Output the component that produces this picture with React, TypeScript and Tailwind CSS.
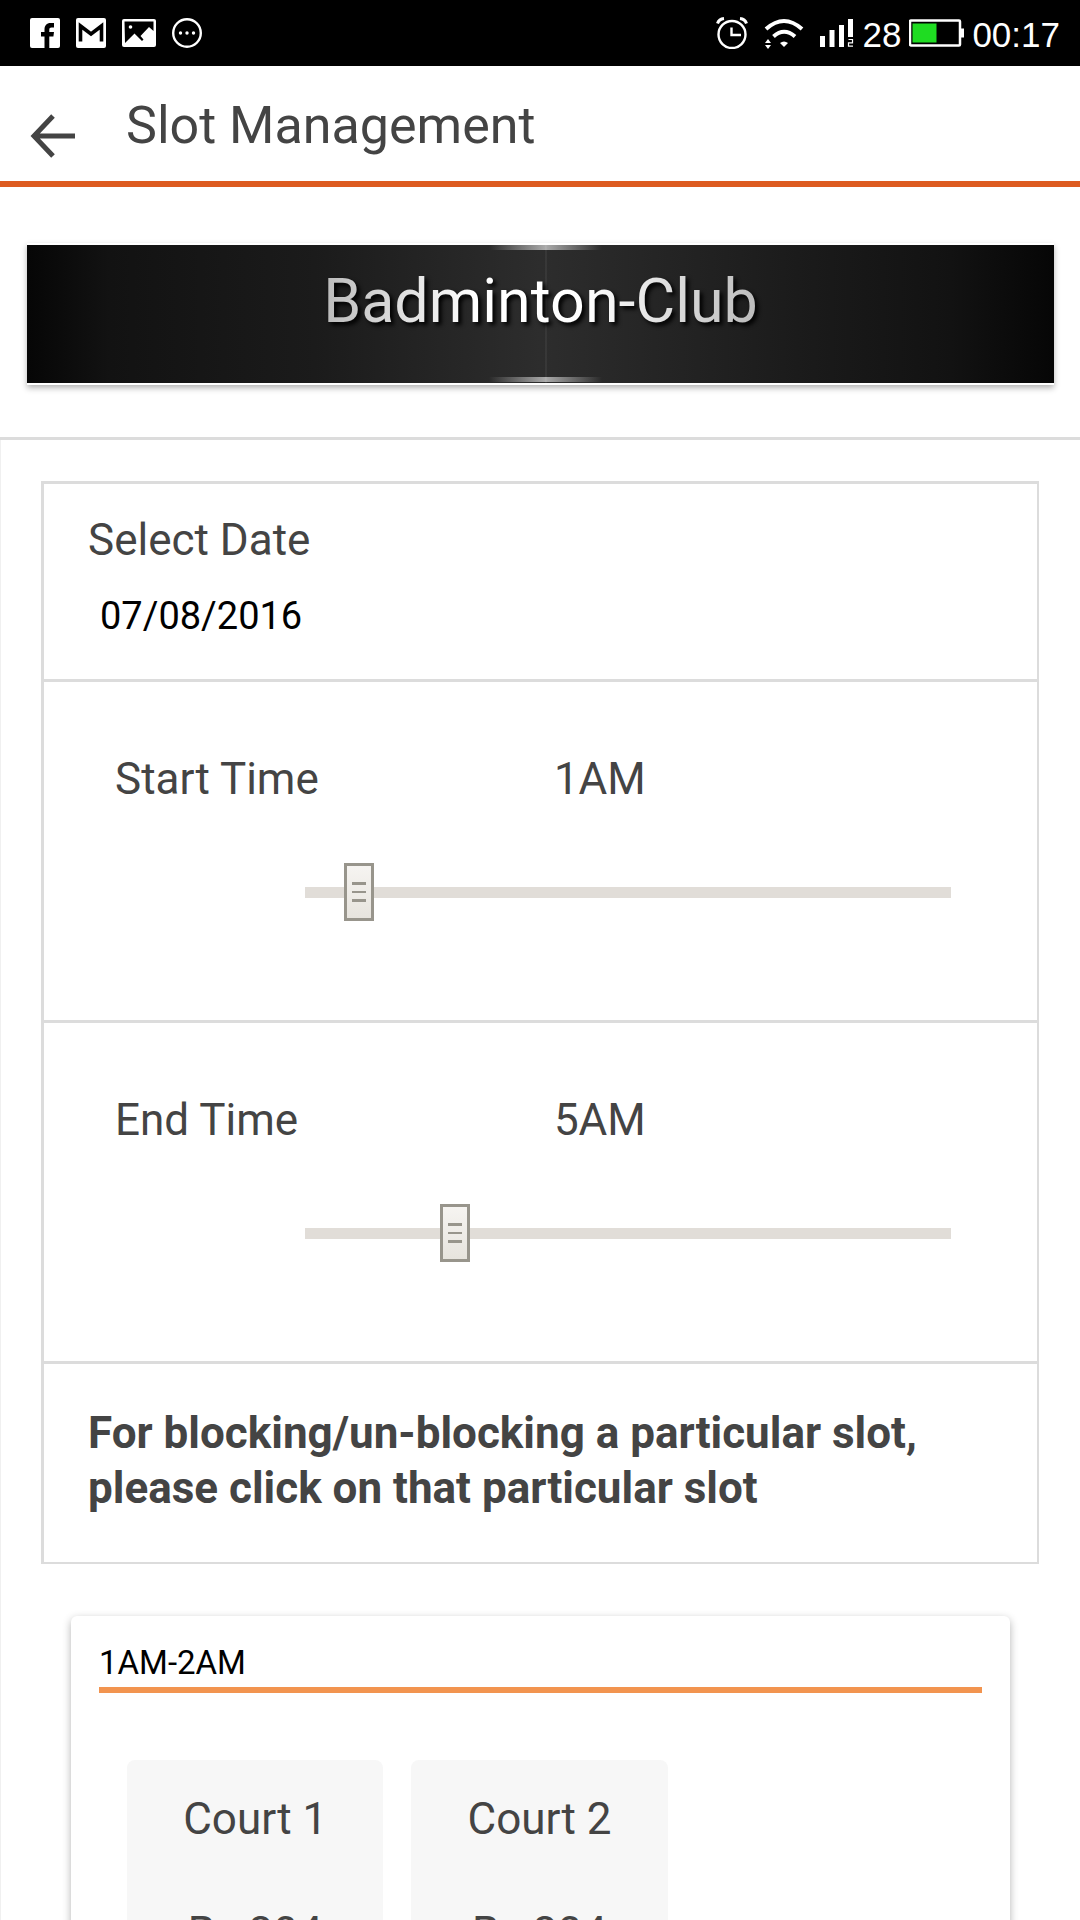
import { useState } from 'react';

const courts = [
  { id: 1, name: 'Court 1', price: 'Rs 304' },
  { id: 2, name: 'Court 2', price: 'Rs 304' },
];

const formatHour = (hour: number) => {
  const h = hour % 12 === 0 ? 12 : hour % 12;
  return `${h}${hour % 24 < 12 ? 'AM' : 'PM'}`;
};

function StatusBar() {
  return (
    <div className="flex h-[66px] shrink-0 items-center justify-between bg-black px-5 pl-[30px] font-['Liberation_Sans',sans-serif] text-[35px] leading-10 text-white">
      <div className="flex items-center gap-4">
        <svg width="30" height="30" viewBox="0 0 30 30" aria-hidden="true">
          <rect width="30" height="30" rx="2" fill="#fff" />
          <path d="M14.500 30V18.500H11V14h3.500v-2.500C14.500 7.500 16.800 5 20.500 5H24v4.500h-2.500c-1.500 0-2.200.8-2.200 2.200V14H24l-.6 4.500h-4.100V30z" fill="#000" />
        </svg>
        <svg width="30" height="30" viewBox="0 0 30 30" aria-hidden="true">
          <rect width="30" height="30" rx="2" fill="#fff" />
          <path d="M4.500 23.500V8l10.500 8L25.500 8v15.500" fill="none" stroke="#000" strokeWidth="3.600" />
        </svg>
        <svg width="34" height="28" viewBox="0 0 34 28" aria-hidden="true">
          <rect width="34" height="28" rx="2" fill="#fff" />
          <path d="M2.500 2.500h29v9.500l-4.500-4-8.500 9 3 3.500-1.500 1.500-7.500-7.500-9.500 9.500z" fill="#000" />
          <circle cx="8.500" cy="8" r="1.800" fill="#fff" />
        </svg>
        <svg width="30" height="30" viewBox="0 0 30 30" fill="#fff" aria-hidden="true">
          <circle cx="15" cy="15" r="13.800" fill="none" stroke="#fff" strokeWidth="2.400" />
          <circle cx="8.500" cy="15" r="1.700" />
          <circle cx="15" cy="15" r="1.700" />
          <circle cx="21.500" cy="15" r="1.700" />
        </svg>
      </div>
      <div className="flex items-center">
        <svg className="mr-4" width="32" height="32" viewBox="0 0 32 32" fill="none" stroke="#fff" aria-hidden="true">
          <circle cx="16" cy="17.500" r="13.500" strokeWidth="2.400" />
          <path d="M15.500 10.500V18H25" strokeWidth="2.400" />
          <path d="M1.500 6.500Q3 2 8 1.500M30.500 6.500Q29 2 24 1.500" strokeWidth="3" />
        </svg>
        <svg className="mr-4" width="40" height="32" viewBox="0 0 40 32" fill="none" stroke="#fff" aria-hidden="true">
          <path d="M2 12Q20 -4 38 12" strokeWidth="4" />
          <path d="M9.500 19.500Q20 10 31 19.500" strokeWidth="4" />
          <path d="M16 26q4-3 8 0l-4 4z" fill="#fff" stroke="none" />
          <path d="M4 22l3 4H1zM4 32l3-4H1z" fill="#fff" stroke="none" />
        </svg>
        <svg className="mr-2" width="34" height="28" viewBox="0 0 34 28" fill="#fff" aria-hidden="true">
          <path d="M0 17h5v11H0zM9.500 11h5v17h-5zM19 6h5v22h-5zM28 0h5v18h-5z" />
          <path d="M28.500 20.500h4v3.300h-4v3.300h4.500" fill="none" stroke="#fff" strokeWidth="1.200" />
        </svg>
        <span className="mr-2 mt-1">28</span>
        <svg className="mr-2" width="55" height="28" viewBox="0 0 55 28" aria-hidden="true">
          <rect x="1" y="1.500" width="50" height="25" rx="1" fill="none" stroke="#fff" strokeWidth="2.500" />
          <rect x="3.500" y="4.500" width="24" height="19" fill="#1fdc22" />
          <rect x="52" y="9.500" width="3" height="9" fill="#fff" />
        </svg>
        <span className="mt-1">00:17</span>
      </div>
    </div>
  );
}

interface TimeSliderProps {
  id: string;
  label: string;
  value: number;
  onChange: (value: number) => void;
}

function TimeSlider({ id, label, value, onChange }: TimeSliderProps) {
  return (
    <div className="border-b-3 border-[#dcdcdc] pb-[99px] pl-[71px] pr-[86px] pt-[69px]">
      <div className="grid grid-cols-[21fr_19fr] text-[44px] leading-[56px]">
        <label htmlFor={id}>{label}</label>
        <output htmlFor={id}>{formatHour(value)}</output>
      </div>
      <input
        id={id}
        type="range"
        min={0}
        max={24}
        value={value}
        onChange={(e) => onChange(Number(e.target.value))}
        className="ml-auto mt-14 block h-[58px] w-[calc(100%-190px)] appearance-none bg-[linear-gradient(#e1ddd8,#e1ddd8)] bg-[length:100%_11px] bg-center bg-no-repeat pl-[15px] pr-[25px] [&::-webkit-slider-thumb]:h-[58px] [&::-webkit-slider-thumb]:w-[30px] [&::-webkit-slider-thumb]:appearance-none [&::-webkit-slider-thumb]:border-3 [&::-webkit-slider-thumb]:border-[#98958c] [&::-webkit-slider-thumb]:[background:linear-gradient(#98958c_3px,transparent_3px_9px,#98958c_9px_11px,transparent_11px_17px,#98958c_17px)_center/14px_20px_no-repeat,linear-gradient(#f6f4f1,#e7e4de)]"
      />
    </div>
  );
}

export default function App() {
  const [date, setDate] = useState('07/08/2016');
  const [startTime, setStartTime] = useState(1);
  const [endTime, setEndTime] = useState(5);

  return (
    <div className="flex h-screen flex-col overflow-hidden bg-white font-[Roboto,sans-serif] text-[#444]">
      <StatusBar />

      <header className="flex h-[121px] shrink-0 items-center border-b-6 border-[#dd5b20] pl-[30px] pt-1">
        <button aria-label="Back" className="mt-5">
          <svg width="46" height="44" viewBox="0 0 46 44" fill="none" stroke="#444" strokeWidth="5" aria-hidden="true">
            <path d="M3 22h42M23 2L4 22l19 20" />
          </svg>
        </button>
        <h1 className="ml-[50px] text-[52px] leading-[60px]">Slot Management</h1>
      </header>

      <div className="border-b-3 border-[#dcdcdc] pb-[52px] pl-[27px] pr-[26px] pt-14">
        <div className="bg-white py-[2px] shadow-[0_3px_6px_rgba(0,0,0,0.3)]">
          <div className="relative h-[138px] bg-[linear-gradient(to_right,#060606,#121212_8%,#1b1b1b_28%,#2d2d2d_50%,#1b1b1b_75%,#121212_90%,#060606)] pt-4 text-center">
            <div className="absolute left-[45%] top-0 h-[5px] w-[11%] bg-[linear-gradient(to_right,transparent,#aaa,transparent)]" />
            <div className="absolute bottom-px left-[45%] h-[5px] w-[11%] bg-[linear-gradient(to_right,transparent,#aaa,transparent)]" />
            <div className="absolute inset-y-0 left-1/2 ml-1 w-[2px] bg-white/5" />
            <h2 className="relative inline-block bg-[linear-gradient(to_right,#bbb,#fff_35%,#fff_60%,#bbb)] bg-clip-text text-[61px] leading-[80px] text-transparent drop-shadow-[3px_3px_2px_#000]">
              Badminton-Club
            </h2>
          </div>
        </div>
      </div>

      <main className="border-l border-[#f0f0f0] pl-10 pr-[41px] pt-[41px]">
        <section className="border-l-3 border-r-2 border-t-3 border-[#dcdcdc]">
          <div className="border-b-3 border-[#dcdcdc] pb-[35px] pl-11 pt-7">
            <label htmlFor="date" className="block text-[44px] leading-[56px]">Select Date</label>
            <input
              id="date"
              type="text"
              value={date}
              onChange={(e) => setDate(e.target.value)}
              className="ml-3 mt-5 block h-14 w-80 text-[38px] text-black"
            />
          </div>
          <TimeSlider id="start-time" label="Start Time" value={startTime} onChange={setStartTime} />
          <TimeSlider id="end-time" label="End Time" value={endTime} onChange={setEndTime} />
          <p className="border-b-2 border-[#dcdcdc] pb-[46px] pl-11 pr-20 pt-[42px] text-[44px] font-bold leading-[55px]">
            For blocking/un-blocking a particular slot, please click on that particular slot
          </p>
        </section>

        <section className="ml-[30px] mr-[29px] mt-[52px] rounded-md bg-white px-7 pb-10 pt-[26px] shadow-[0_3px_8px_rgba(0,0,0,0.3)]">
          <h3 className="border-b-6 border-[#f2944f] pb-1 text-[33px] leading-[41px] text-black">1AM-2AM</h3>
          <div className="mt-[67px] flex gap-7 px-7">
            {courts.map(court => (
              <button key={court.id} className="w-[31%] rounded-lg bg-[#f7f7f7] pb-8 pt-[31px] text-[44px] leading-[56px]">
                <span className="block">{court.name}</span>
                <span className="mt-[58px] block">{court.price}</span>
              </button>
            ))}
          </div>
        </section>
      </main>
    </div>
  );
}
